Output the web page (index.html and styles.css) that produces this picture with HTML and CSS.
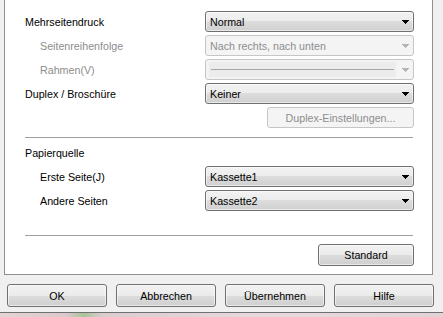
FILE: index.html
```html
<!DOCTYPE html>
<html lang="de">

<head>
    <meta charset="UTF-8" />
    <title>Layout</title>
    <link rel="stylesheet" href="styles.css">
</head>

<body>
    <div class="dialog">
        <!-- Tab page -->
        <div class="panel">
            <div class="row">
                <span class="label">Mehrseitendruck</span>
                <div class="combo"><span>Normal</span><svg class="arrow" width="7" height="4" viewBox="0 0 7 4"><path d="M0 0h7v1H0zM1 1h5v1H1zM2 2h3v1H2zM3 3h1v1H3z" /></svg></div>
            </div>
            <div class="row">
                <span class="label sub disabled">Seitenreihenfolge</span>
                <div class="combo off"><span>Nach rechts, nach unten</span><svg class="arrow" width="7" height="4" viewBox="0 0 7 4"><path d="M0 0h7v1H0zM1 1h5v1H1zM2 2h3v1H2zM3 3h1v1H3z" /></svg></div>
            </div>
            <div class="row">
                <span class="label sub disabled">Rahmen(V)</span>
                <div class="combo off"><div class="frame-line"><i></i></div><svg class="arrow" width="7" height="4" viewBox="0 0 7 4"><path d="M0 0h7v1H0zM1 1h5v1H1zM2 2h3v1H2zM3 3h1v1H3z" /></svg></div>
            </div>
            <div class="row">
                <span class="label">Duplex / Broschüre</span>
                <div class="combo"><span>Keiner</span><svg class="arrow" width="7" height="4" viewBox="0 0 7 4"><path d="M0 0h7v1H0zM1 1h5v1H1zM2 2h3v1H2zM3 3h1v1H3z" /></svg></div>
            </div>
            <div class="row end">
                <button class="btn off duplex">Duplex-Einstellungen...</button>
            </div>

            <div class="separator"></div>

            <div class="row heading">
                <span class="label">Papierquelle</span>
            </div>
            <div class="row">
                <span class="label sub">Erste Seite(J)</span>
                <div class="combo"><span>Kassette1</span><svg class="arrow" width="7" height="4" viewBox="0 0 7 4"><path d="M0 0h7v1H0zM1 1h5v1H1zM2 2h3v1H2zM3 3h1v1H3z" /></svg></div>
            </div>
            <div class="row">
                <span class="label sub">Andere Seiten</span>
                <div class="combo"><span>Kassette2</span><svg class="arrow" width="7" height="4" viewBox="0 0 7 4"><path d="M0 0h7v1H0zM1 1h5v1H1zM2 2h3v1H2zM3 3h1v1H3z" /></svg></div>
            </div>

            <div class="separator low"></div>

            <div class="row end">
                <button class="btn standard">Standard</button>
            </div>
        </div>

        <!-- Dialog buttons -->
        <div class="actions">
            <button class="btn wide">OK</button>
            <button class="btn wide">Abbrechen</button>
            <button class="btn wide">Übernehmen</button>
            <button class="btn wide">Hilfe</button>
        </div>

        <div class="desktop"></div>
    </div>
</body>

</html>
```

FILE: styles.css
```css
body {
    margin: 0;
    font-family: "Liberation Sans", Arial, sans-serif;
    font-size: 10.7px;
    color: #000;
    background-color: #f0f0f0;
    overflow: hidden;
}

.dialog {
    width: 443px;
    height: 317px;
    background-color: #f0f0f0;
}

.panel {
    box-sizing: border-box;
    margin-left: 4px;
    width: 429px;
    height: 275px;
    padding: 11px 18px 0 20px;
    background-color: #fff;
    border: 1px solid #8e8f8f;
    border-top: none;
}

.row {
    display: flex;
    align-items: center;
    height: 21px;
    margin-bottom: 3px;
}

.row.end {
    justify-content: flex-end;
}

.row.heading {
    margin-top: 4px;
}

.label {
    width: 180px;
    white-space: nowrap;
}

.label.sub {
    padding-left: 15px;
    width: 165px;
}

.disabled {
    color: #8d8d8d;
}

.combo {
    box-sizing: border-box;
    width: 209px;
    height: 21px;
    display: flex;
    align-items: center;
    justify-content: space-between;
    padding: 0 4px 0 4px;
    border: 1px solid #707070;
    border-radius: 3px;
    background: linear-gradient(#f3f3f3 0%, #ebebeb 50%, #dddddd 50%, #cfcfcf 100%);
    box-shadow: inset 0 0 0 1px rgba(255, 255, 255, 0.55);
}

.combo .arrow {
    flex: none;
    fill: #000;
}

.combo.off {
    border-color: #c4c6c8;
    background: #f4f4f4;
    box-shadow: none;
    color: #8d8d8d;
}

.combo.off .arrow {
    fill: #b3b3b3;
}

.frame-line {
    width: 187px;
    height: 15px;
    margin-left: -1px;
    background-color: #ececec;
    display: flex;
    align-items: center;
    padding: 0 2px;
    box-sizing: border-box;
}

.frame-line i {
    display: block;
    width: 100%;
    height: 1px;
    background-color: #a5a5a5;
}

.btn {
    box-sizing: border-box;
    font-family: inherit;
    font-size: inherit;
    color: #000;
    padding: 0;
    border: 1px solid #707070;
    border-radius: 3px;
    background: linear-gradient(#f2f2f2 0%, #ebebeb 50%, #dddddd 50%, #cfcfcf 100%);
    box-shadow: inset 0 0 0 1px rgba(255, 255, 255, 0.55);
}

.btn.off {
    border-color: #c4c6c8;
    background: #f4f4f4;
    box-shadow: none;
    color: #8d8d8d;
}

.duplex {
    width: 147px;
    height: 21px;
}

.standard {
    width: 96px;
    height: 22px;
}

.separator {
    height: 1px;
    margin: 9px 1px 0 0;
    background-color: #a0a0a0;
}

.separator.low {
    margin-top: 24px;
    margin-bottom: 8px;
}

.actions {
    display: flex;
    gap: 9px;
    padding-left: 7px;
    margin-top: 9px;
}

.btn.wide {
    width: 100px;
    height: 23px;
}

.desktop {
    margin-top: 5px;
    height: 5px;
    border-top: 1px solid #707070;
    background: linear-gradient(90deg, #e4d4d6 0%, #dcc8cc 15%, #a8c49a 19%, #d9cdd0 23%, #e8dadc 60%, #e0d2d6 100%);
}
```
